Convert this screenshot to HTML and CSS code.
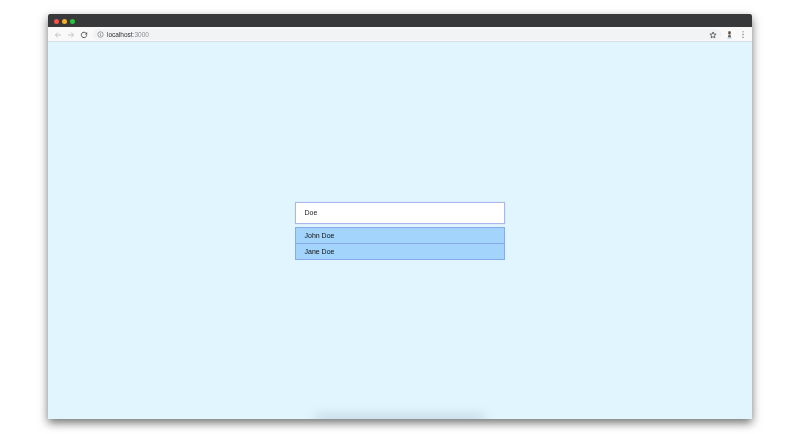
FILE: index.html
```html
<!DOCTYPE html>
<html lang="en">
<head>
<meta charset="utf-8">
<title>localhost:3000</title>
<link rel="stylesheet" href="styles.css">
</head>
<body>
<div class="window">
  <div class="titlebar">
    <span class="dot dot-red"></span>
    <span class="dot dot-yellow"></span>
    <span class="dot dot-green"></span>
  </div>
  <div class="toolbar">
    <svg class="tool-icon" viewBox="0 0 8 8"><path d="M7 4H1.6M3.8 1.6 1.4 4l2.400 2.400" fill="none" stroke="#b4b6b9" stroke-width=".8"/></svg>
    <svg class="tool-icon" viewBox="0 0 8 8"><path d="M1 4h5.400M4.200 1.600 6.600 4 4.200 6.400" fill="none" stroke="#b4b6b9" stroke-width=".8"/></svg>
    <svg class="tool-icon" viewBox="0 0 8 8"><path d="M6.300 2.500A2.700 2.700 0 1 0 6.700 4.200" fill="none" stroke="#45484c" stroke-width=".9"/><path d="M7.200 1v2.400H4.800z" fill="#45484c"/></svg>
    <div class="omnibox">
      <svg class="info" viewBox="0 0 8 8"><circle cx="4" cy="4" r="3.100" fill="none" stroke="#6a6d71" stroke-width=".7"/><path d="M4 3.600v2.200M4 2.200v.8" stroke="#6a6d71" stroke-width=".7"/></svg>
      <span class="url">localhost<span class="port">:3000</span></span>
      <svg class="star" viewBox="0 0 10 10"><path d="M5 1.200 6.100 3.800 8.900 4 6.800 5.800 7.400 8.600 5 7.100 2.600 8.600 3.200 5.800 1.100 4 3.900 3.800Z" fill="none" stroke="#55585c" stroke-width="1.100"/></svg>
    </div>
    <svg class="avatar" viewBox="0 0 8 10"><path d="M2.600 .8h2.800v3H2.600z" fill="#5b4a40"/><path d="M3 3.800h2v1.600H3z" fill="#a08d80"/><path d="M2.400 5.400h3.200v2.400H2.400z" fill="#5a575a"/><path d="M1.600 7.800h4.800v1.400H1.600z" fill="#bdd6df"/></svg>
    <svg class="menu" viewBox="0 0 4 10"><circle cx="2" cy="2" r=".75" fill="#6a6e72"/><circle cx="2" cy="5" r=".75" fill="#6a6e72"/><circle cx="2" cy="8" r=".75" fill="#6a6e72"/></svg>
  </div>
  <main class="content">
    <div class="search">
      <div class="search-input">Doe</div>
      <ul class="results">
        <li class="result">John Doe</li>
        <li class="result">Jane Doe</li>
      </ul>
    </div>
    <div class="bottom-shade"></div>
  </main>
</div>
</body>
</html>
```
FILE: styles.css
```css
* { box-sizing: border-box; }
html, body { margin: 0; height: 100%; }
body {
  background: #fff;
  padding: 14px 48px 15px;
  font-family: "Liberation Sans", Arial, sans-serif;
  overflow: hidden;
}
.window {
  height: 405px;
  display: flex;
  flex-direction: column;
  box-shadow: 0 4px 9px rgba(0, 0, 0, .55);
  filter: blur(.4px);
}
.titlebar {
  height: 13px;
  flex: none;
  background: #37393b;
  display: flex;
  align-items: center;
  gap: 3px;
  padding: 1px 0 0 6px;
  border-radius: 2px 2px 0 0;
}
.dot { width: 5px; height: 5px; border-radius: 50%; }
.dot-red { background: #f2544c; }
.dot-yellow { background: #f5b02e; }
.dot-green { background: #27c23f; }
.toolbar {
  height: 15px;
  flex: none;
  background: #f9f9fa;
  display: flex;
  align-items: center;
  padding: 1px 7px 0 6px;
  gap: 5px;
  border-bottom: 1px solid #d6e2ea;
}
.tool-icon { width: 8px; height: 8px; flex: none; }
.omnibox {
  flex: 1;
  height: 11px;
  background: #f1f3f4;
  border-radius: 6px;
  display: flex;
  align-items: center;
  padding: 0 5px 0 4px;
  gap: 3px;
}
.info { width: 7px; height: 7px; flex: none; }
.url { flex: 1; font-size: 6.5px; color: #2e3033; line-height: 1; padding-top: 1px; }
.port { color: #8b8e92; }
.star { width: 8px; height: 8px; flex: none; }
.avatar { width: 7px; height: 10px; flex: none; margin-left: -1px; }
.menu { width: 4px; height: 9px; flex: none; margin-left: 3px; }
.content {
  flex: 1;
  position: relative;
  background: #e1f5fe;
  display: flex;
  flex-direction: column;
  align-items: center;
  padding-top: 160px;
}
.search { width: 210px; }
.search-input {
  height: 22px;
  background: #fff;
  border: 1px solid #aab6ec;
  box-shadow: 0 0 1px rgba(170, 182, 236, .6);
  padding: 0 0 1px 8.5px;
  display: flex;
  align-items: center;
  font-size: 7px;
  color: #1c1c1c;
}
.results { list-style: none; margin: 3px 0 0; padding: 0; }
.result {
  height: 17px;
  margin-top: -1px;
  background: #a3d4fb;
  border: 1px solid #8aa9ea;
  padding-left: 8.5px;
  display: flex;
  align-items: center;
  font-size: 7px;
  color: #111;
}
.results .result:first-child { margin-top: 0; }
.bottom-shade {
  position: absolute;
  left: 268px;
  bottom: -4px;
  width: 168px;
  height: 8px;
  background: rgba(110, 140, 150, .3);
  filter: blur(6px);
  clip-path: inset(-20px -20px 4px -20px);
}
```
